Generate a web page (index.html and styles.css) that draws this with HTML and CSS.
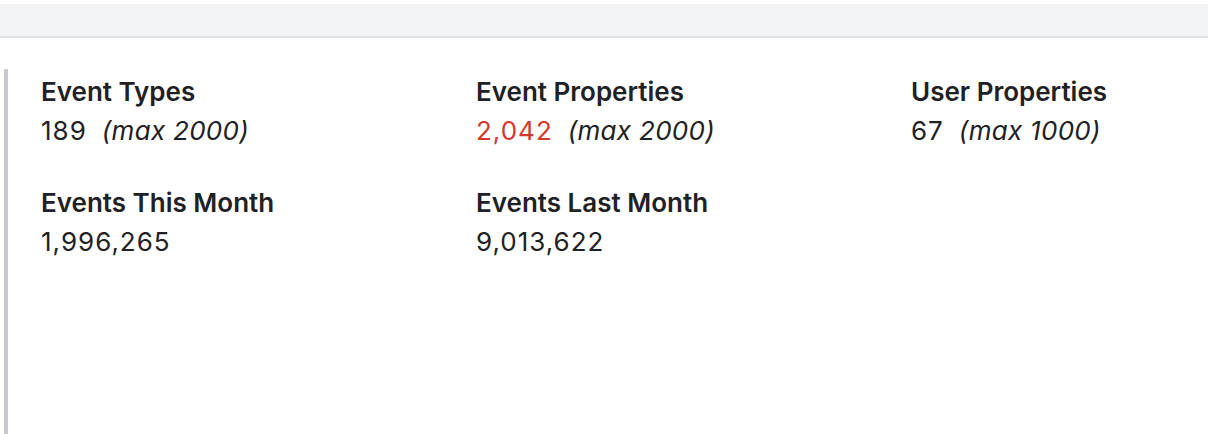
FILE: index.html
```html
<!DOCTYPE html>
<html>
<head>
	<meta charset="utf-8">
	<title>Usage</title>
	<link rel="stylesheet" href="styles.css">
</head>
<body>
	<div class="topbar"></div>

	<div class="panel">
		<div class="stats">
			<div class="stat">
				<div class="stat-title">Event Types</div>
				<div class="stat-value"><span class="num">189</span><em class="max">(max 2000)</em></div>
			</div>
			<div class="stat">
				<div class="stat-title">Event Properties</div>
				<div class="stat-value"><span class="num over">2,042</span><em class="max">(max 2000)</em></div>
			</div>
			<div class="stat">
				<div class="stat-title">User Properties</div>
				<div class="stat-value"><span class="num">67</span><em class="max">(max 1000)</em></div>
			</div>
			<div class="stat">
				<div class="stat-title">Events This Month</div>
				<div class="stat-value"><span class="num">1,996,265</span></div>
			</div>
			<div class="stat">
				<div class="stat-title">Events Last Month</div>
				<div class="stat-value"><span class="num">9,013,622</span></div>
			</div>
		</div>
	</div>
</body>
</html>
```

FILE: styles.css
```css
* {
	margin: 0;
	padding: 0;
	box-sizing: border-box;
}

body {
	font-family: Inter, "Noto Sans", sans-serif;
	color: #1f2124;
	background: #fff;
}

.topbar {
	margin-top: 4px;
	height: 34px;
	background: #f3f4f6;
	border-bottom: 2px solid #e1e2e4;
}

.panel {
	margin: 31px 0 0 4px;
	height: 365px;
	border-left: 4px solid #c9c9cd;
	padding: 4px 0 0 33px;
}

.stats {
	display: grid;
	grid-template-columns: 435px 435px 1fr;
	row-gap: 34px;
}

.stat-title {
	font-size: 26px;
	font-weight: 600;
	line-height: 38px;
}

.stat-value {
	font-size: 26px;
	line-height: 39px;
}

.num {
	letter-spacing: 1px;
}

.over {
	color: #d4382c;
}

.max {
	margin-left: 15px;
	letter-spacing: 0.3px;
}
```
